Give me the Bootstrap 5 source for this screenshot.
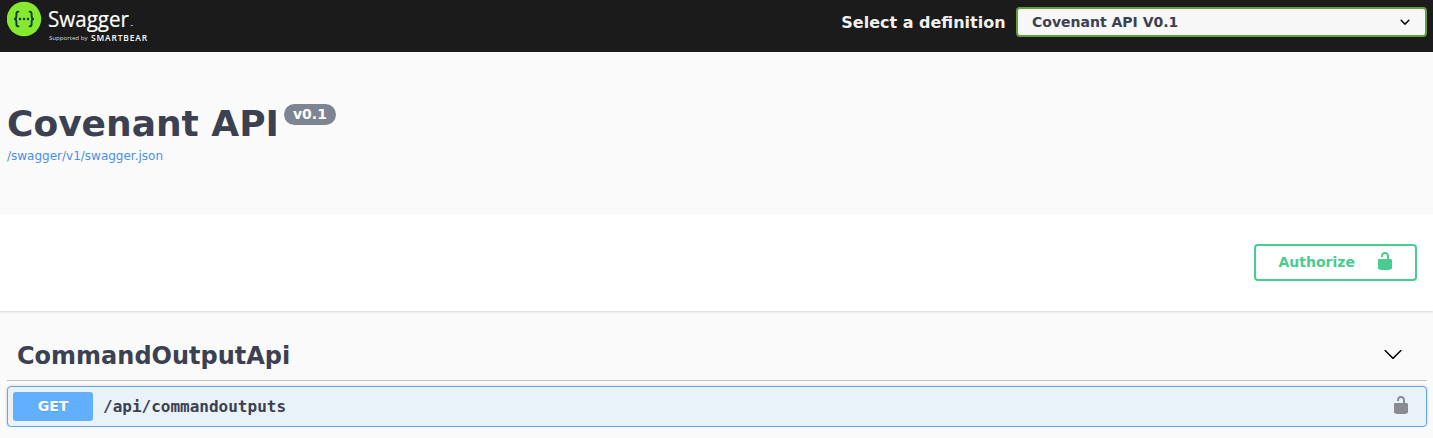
<!DOCTYPE html>
<html lang="en">
<head>
<meta charset="utf-8">
<title>Swagger UI</title>
<link href="https://cdn.jsdelivr.net/npm/bootstrap@5.3.0/dist/css/bootstrap.min.css" rel="stylesheet">
<style>
body{font-family:"DejaVu Sans",sans-serif;background:#fafafa;color:#3b4151;font-size:14px;line-height:1.15;overflow:hidden}
.topbar{height:52px;background:#1b1b1b;padding:0 6px 0 7px}
.brand{width:150px;height:52px}
.pick-label{font-size:16px;color:#f0f0f0;margin:-6px 10.4px 0 0}
.definition{width:411px;height:30px;margin-top:-8px;border:2px solid #62a03f;border-radius:4px;background:#f7f7f7;padding:0 10px 0 14px;color:#3b4151}
.info{height:162px;padding:50px 7px 0}
.info h1{font-size:36px;line-height:42px;font-weight:700;margin:1px 0 0}
.version{height:21px;border-radius:57px;background:#7d8492;color:#fff;padding:0 9px;margin:2px 0 0 5px;line-height:21px}
.spec{font-size:12px;line-height:14px;color:#4990e2;margin-top:4px}
.schemes{height:97px;background:#fff;box-shadow:0 1px 2px rgba(0,0,0,.15);padding-right:16px}
.authorize{width:163px;height:37px;border:2px solid #49cc90;border-radius:4px;color:#49cc90;padding:0 20px 0 22.500px;background:transparent}
.lock{margin-bottom:3px}
.api-tag{height:70px;margin:0 6px 5px 7px;padding:17px 24px 0 10px;border-bottom:1px solid rgba(59,65,81,.3)}
.api-tag h2{font-size:24px;line-height:28px;margin:4px 0 0;font-weight:700}
.operation{height:41px;margin:0 6px 0 7px;border:1px solid #61a5ee;border-radius:4px;background:#e9f1f9;box-shadow:0 0 3px rgba(0,0,0,.19);padding:0 15px 0 5px}
.method{width:80px;height:29px;border-radius:3px;background:#61affe;color:#fff;line-height:29px;text-shadow:0 1px 0 rgba(0,0,0,.1)}
.path{font-family:"DejaVu Sans Mono",monospace;font-size:16px;margin:2px 0 0 10px}
</style>
</head>
<body>
<header class="topbar d-flex align-items-center justify-content-between">
  <svg class="brand" viewBox="0 0 150 52" role="img" aria-label="Swagger, supported by SmartBear">
    <circle cx="17" cy="19" r="17.2" fill="#85ea2d"/>
    <g fill="none" stroke="#173647" stroke-width="1.9">
      <path d="M12.2 11.6h-.8c-1.5 0-2 .8-2 2.2v2.4c0 1.8-.7 2.7-2.2 2.8 1.500.1 2.200 1 2.200 2.800v2.400c0 1.400.5 2.200 2 2.200h.8"/>
      <path d="M21.800 11.600h.8c1.500 0 2 .8 2 2.200v2.400c0 1.800.7 2.700 2.200 2.800-1.500.1-2.200 1-2.200 2.800v2.400c0 1.400-.5 2.200-2 2.200h-.8"/>
    </g>
    <g fill="#173647"><circle cx="13" cy="19" r="1.25"/><circle cx="17" cy="19" r="1.25"/><circle cx="21" cy="19" r="1.25"/></g>
    <g fill="#fff">
      <text x="41" y="26.600" font-family="Open Sans, sans-serif" font-size="21.500" textLength="81" lengthAdjust="spacingAndGlyphs" stroke="#fff" stroke-width=".2">Swagger</text>
      <rect x="123.500" y="25" width="2.500" height="1" opacity=".6"/>
      <text x="42" y="40.300" font-family="Open Sans, sans-serif" font-size="6" textLength="38.500" lengthAdjust="spacingAndGlyphs" fill="#ddd">Supported by</text>
      <text x="84" y="40.500" font-family="Open Sans, sans-serif" font-weight="600" font-size="8.400" textLength="56">SMARTBEAR</text>
    </g>
  </svg>
  <div class="d-flex align-items-center">
    <span class="pick-label fw-bold">Select a definition</span>
    <div class="definition d-flex align-items-center justify-content-between fw-bold">
      <span>Covenant API V0.1</span>
      <svg width="20" height="20" viewBox="0 0 20 20"><path d="M13.418 7.859a.695.695 0 01.978 0 .68.68 0 010 .969l-3.908 3.830a.697.697 0 01-.979 0l-3.908-3.830a.68.68 0 010-.969.695.695 0 01.978 0L10 11l3.418-3.141z"/></svg>
    </div>
  </div>
</header>
<section class="info">
  <div class="d-flex align-items-start"><h1>Covenant API</h1><span class="version fw-bold">v0.1</span></div>
  <div class="spec">/swagger/v1/swagger.json</div>
</section>
<section class="schemes d-flex align-items-center justify-content-end">
  <button class="authorize d-flex align-items-center justify-content-between fw-bold">Authorize
    <svg class="lock" width="20" height="20" viewBox="0 0 20 20" fill="currentColor"><path d="M15.800 8H14V5.600C14 2.703 12.665 1 10 1 7.334 1 6 2.703 6 5.600V6h2v-.801C8 3.754 8.797 3 10 3c1.203 0 2 .754 2 2.199V8H4c-.553 0-1 .646-1 1.199V17c0 .549.428 1.139.951 1.307l1.197.387C5.672 18.861 6.550 19 7.100 19h5.800c.549 0 1.428-.139 1.951-.307l1.196-.387c.524-.167.953-.757.953-1.306V9.199C17 8.646 16.352 8 15.800 8z"/></svg>
  </button>
</section>
<main>
  <div class="api-tag d-flex align-items-center justify-content-between">
    <h2>CommandOutputApi</h2>
    <svg width="20" height="20" viewBox="0 0 20 20"><path d="M17.418 6.109c.272-.268.709-.268.979 0s.271.701 0 .969l-7.908 7.830c-.27.268-.707.268-.979 0l-7.908-7.830c-.27-.268-.27-.701 0-.969.271-.268.709-.268.979 0L10 13.250l7.418-7.141z"/></svg>
  </div>
  <div class="operation d-flex align-items-center">
    <span class="method fw-bold text-center">GET</span>
    <span class="path fw-bold">/api/commandoutputs</span>
    <svg class="lock ms-auto" width="20" height="20" viewBox="0 0 20 20" fill="#888c90"><path d="M15.800 8H14V5.600C14 2.703 12.665 1 10 1 7.334 1 6 2.703 6 5.600V6h2v-.801C8 3.754 8.797 3 10 3c1.203 0 2 .754 2 2.199V8H4c-.553 0-1 .646-1 1.199V17c0 .549.428 1.139.951 1.307l1.197.387C5.672 18.861 6.550 19 7.100 19h5.800c.549 0 1.428-.139 1.951-.307l1.196-.387c.524-.167.953-.757.953-1.306V9.199C17 8.646 16.352 8 15.800 8z"/></svg>
  </div>
</main>
<script src="https://cdn.jsdelivr.net/npm/bootstrap@5.3.0/dist/js/bootstrap.bundle.min.js"></script>
</body>
</html>
